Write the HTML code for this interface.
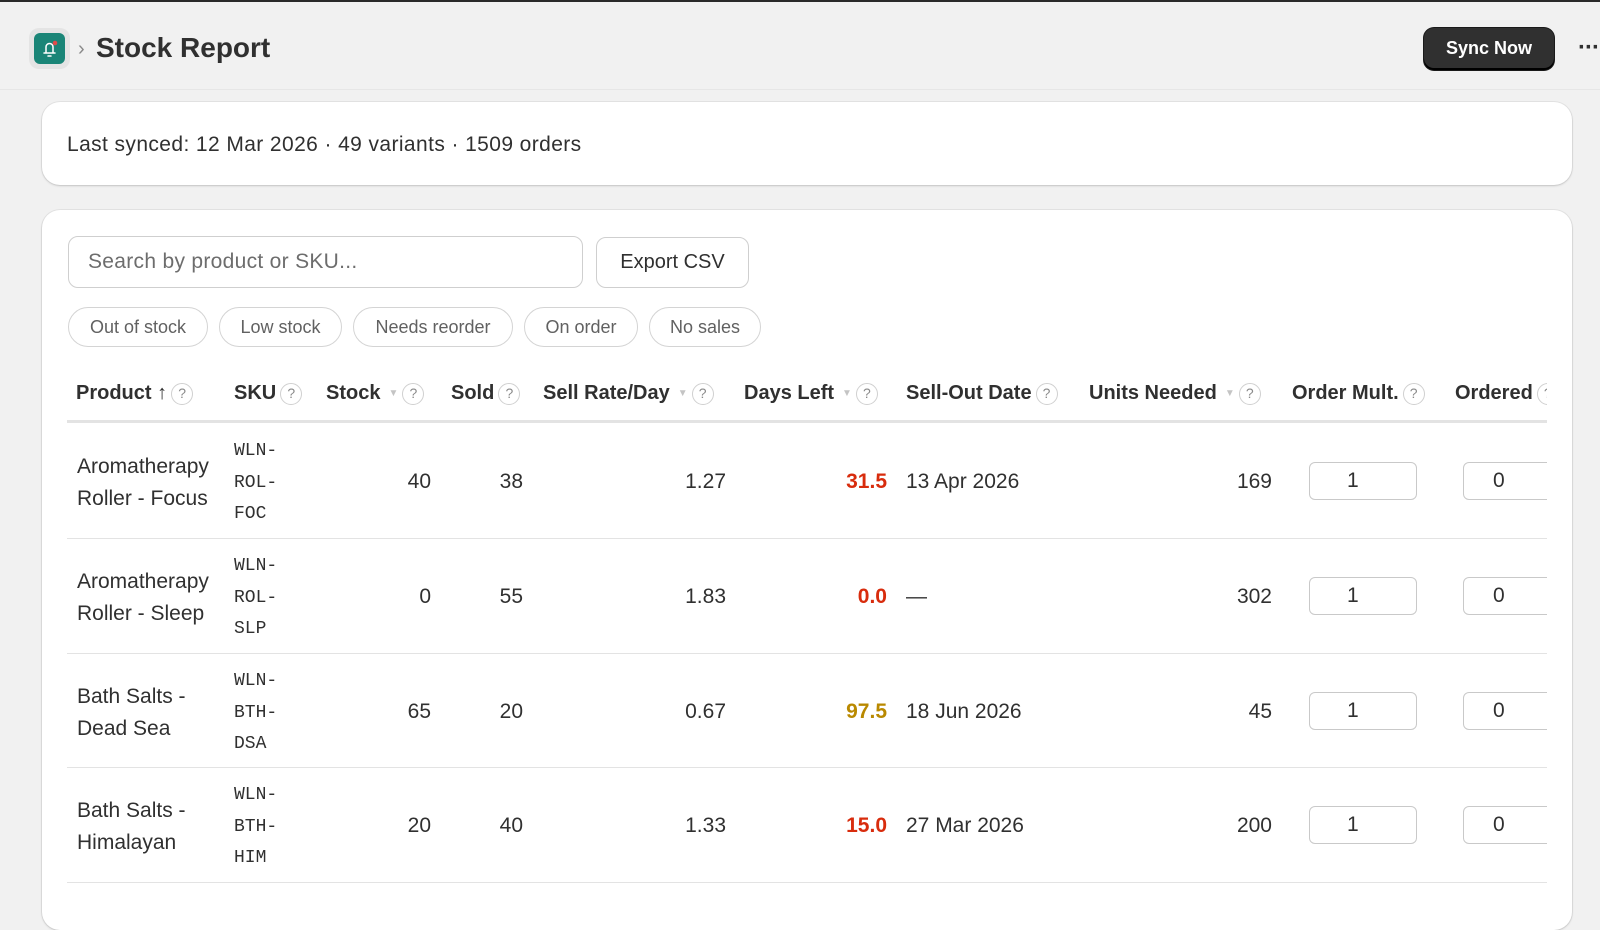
<!DOCTYPE html>
<html><head><meta charset="utf-8"><style>
*{box-sizing:border-box;margin:0;padding:0}
body{width:1600px;height:900px;overflow:hidden;background:#f1f1f1;font-family:"Liberation Sans",sans-serif;color:#303030;position:relative}
.a{position:absolute;white-space:nowrap}
.topline{left:0;top:0;width:1600px;height:2px;background:#2a2a2a}
.hdr{left:0;top:2px;width:1600px;height:88px;border-bottom:1px solid #e6e6e6;background:#f1f1f1}
.card{background:#fff;border-radius:18px;box-shadow:0 1px 2px rgba(0,0,0,.15),0 0 0 1px rgba(0,0,0,.05)}
.pill{top:307px;height:40px;border:1px solid #d4d4d4;border-radius:20px;font-size:18px;color:#616161;text-align:center;line-height:38px}
.th{top:382px;font-size:20px;font-weight:bold;color:#303030}
.q{display:inline-block;width:22px;height:22px;border:1.5px solid #d0d0d0;border-radius:50%;font-size:14px;font-weight:normal;color:#8a8a8a;text-align:center;line-height:19px;vertical-align:middle;margin-left:4px}
.car{font-size:10px;color:#c4c4c4;font-weight:normal;vertical-align:middle;margin-left:8px}
.td{font-size:21px;color:#303030}
.r{text-align:right}
.mono{font-family:"Liberation Mono",monospace;font-size:18px;line-height:31.5px}
.inp{width:108px;height:38px;border:1px solid #c9c9c9;border-radius:6px;background:#fff;font-size:21px;line-height:36px}
.sep{left:67px;width:1480px;height:1px;background:#e3e3e3}
</style></head><body>
<div class="a topline"></div>
<div class="a hdr"></div>
<div class="a" style="left:29px;top:28px;width:41px;height:41px;border-radius:10px;background:#e4e4e4"></div>
<div class="a" style="left:34px;top:33px;width:31px;height:31px;border-radius:6px;background:#1a8577">
<svg width="31" height="31" viewBox="0 0 31 31"><path d="M10 20h11M12 20v-6a3.5 3.5 0 0 1 7 0v6M14 23h3" stroke="#fff" stroke-width="1.5" fill="none" stroke-linecap="round"/><circle cx="21" cy="10" r="2.3" fill="#e14b4b"/></svg></div>
<div class="a" style="left:78px;top:38px;font-size:20px;color:#8a8a8a">›</div>
<div class="a" style="left:96px;top:32px;font-size:28px;font-weight:bold;color:#303030">Stock Report</div>
<div class="a" style="left:1424px;top:28px;width:130px;height:42px;border-radius:10px;background:#303030;box-shadow:inset 0 -2px 0 #000,0 0 0 1px #1a1a1a;color:#fff;font-size:18px;font-weight:bold;text-align:center;line-height:40px">Sync Now</div>
<div class="a" style="left:1578px;top:34px;font-size:24px;font-weight:bold;color:#303030;letter-spacing:-1px">···</div>

<div class="a card" style="left:42px;top:102px;width:1530px;height:83px"></div>
<div class="a" style="left:67px;top:133px;font-size:21px;letter-spacing:0.4px;color:#303030">Last synced: 12 Mar 2026 · 49 variants · 1509 orders</div>

<div class="a card" style="left:42px;top:210px;width:1530px;height:720px"></div>
<div class="a" style="left:68px;top:236px;width:515px;height:52px;border:1px solid #cfcfcf;border-radius:10px;font-size:21px;letter-spacing:0.3px;color:#6d6d6d;line-height:50px;padding-left:19px">Search by product or SKU...</div>
<div class="a" style="left:596px;top:237px;width:153px;height:51px;border:1px solid #cfcfcf;border-radius:10px;font-size:20px;color:#303030;text-align:center;line-height:49px">Export CSV</div>
<div class="a pill" style="left:68px;width:140px">Out of stock</div>
<div class="a pill" style="left:219px;width:123px">Low stock</div>
<div class="a pill" style="left:353px;width:160px">Needs reorder</div>
<div class="a pill" style="left:524px;width:114px">On order</div>
<div class="a pill" style="left:649px;width:112px">No sales</div>

<div class="a th" style="left:76px">Product ↑<span class="q">?</span></div>
<div class="a th" style="left:234px">SKU<span class="q">?</span></div>
<div class="a th" style="left:326px">Stock<span class="car">▼</span><span class="q">?</span></div>
<div class="a th" style="left:451px">Sold<span class="q">?</span></div>
<div class="a th" style="left:543px">Sell Rate/Day<span class="car">▼</span><span class="q">?</span></div>
<div class="a th" style="left:744px">Days Left<span class="car">▼</span><span class="q">?</span></div>
<div class="a th" style="left:906px">Sell-Out Date<span class="q">?</span></div>
<div class="a th" style="left:1089px">Units Needed<span class="car">▼</span><span class="q">?</span></div>
<div class="a th" style="left:1292px">Order Mult.<span class="q">?</span></div>
<div class="a" style="left:1455px;top:382px;width:92px;overflow:hidden;font-size:20px;font-weight:bold">Ordered<span class="q">?</span></div>
<div class="a" style="left:67px;top:420px;width:1480px;height:3px;background:#e3e3e3"></div>

<div class="a" style="left:0;top:423px;width:1600px;height:115px">
<div class="a td" style="left:77px;top:28px;line-height:32px">Aromatherapy<br>Roller - Focus</div>
<div class="a mono" style="left:234px;top:13px">WLN-<br>ROL-<br>FOC</div>
<div class="a td r" style="right:1169px;top:47px">40</div>
<div class="a td r" style="right:1077px;top:47px">38</div>
<div class="a td r" style="right:874px;top:47px">1.27</div>
<div class="a td r" style="right:713px;top:47px;color:#d82c0d;font-weight:bold">31.5</div>
<div class="a td" style="left:906px;top:47px">13 Apr 2026</div>
<div class="a td r" style="right:328px;top:47px">169</div>
<div class="a inp" style="left:1309px;top:39px;padding-left:37px">1</div>
<div class="a" style="left:1463px;top:39px;width:84px;overflow:hidden"><div class="inp" style="padding-left:29px">0</div></div>
</div>
<div class="a sep" style="top:538px"></div>
<div class="a" style="left:0;top:538px;width:1600px;height:115px">
<div class="a td" style="left:77px;top:28px;line-height:32px">Aromatherapy<br>Roller - Sleep</div>
<div class="a mono" style="left:234px;top:13px">WLN-<br>ROL-<br>SLP</div>
<div class="a td r" style="right:1169px;top:47px">0</div>
<div class="a td r" style="right:1077px;top:47px">55</div>
<div class="a td r" style="right:874px;top:47px">1.83</div>
<div class="a td r" style="right:713px;top:47px;color:#d82c0d;font-weight:bold">0.0</div>
<div class="a td" style="left:906px;top:47px">—</div>
<div class="a td r" style="right:328px;top:47px">302</div>
<div class="a inp" style="left:1309px;top:39px;padding-left:37px">1</div>
<div class="a" style="left:1463px;top:39px;width:84px;overflow:hidden"><div class="inp" style="padding-left:29px">0</div></div>
</div>
<div class="a sep" style="top:653px"></div>
<div class="a" style="left:0;top:653px;width:1600px;height:115px">
<div class="a td" style="left:77px;top:28px;line-height:32px">Bath Salts -<br>Dead Sea</div>
<div class="a mono" style="left:234px;top:13px">WLN-<br>BTH-<br>DSA</div>
<div class="a td r" style="right:1169px;top:47px">65</div>
<div class="a td r" style="right:1077px;top:47px">20</div>
<div class="a td r" style="right:874px;top:47px">0.67</div>
<div class="a td r" style="right:713px;top:47px;color:#b98900;font-weight:bold">97.5</div>
<div class="a td" style="left:906px;top:47px">18 Jun 2026</div>
<div class="a td r" style="right:328px;top:47px">45</div>
<div class="a inp" style="left:1309px;top:39px;padding-left:37px">1</div>
<div class="a" style="left:1463px;top:39px;width:84px;overflow:hidden"><div class="inp" style="padding-left:29px">0</div></div>
</div>
<div class="a sep" style="top:767px"></div>
<div class="a" style="left:0;top:767px;width:1600px;height:115px">
<div class="a td" style="left:77px;top:28px;line-height:32px">Bath Salts -<br>Himalayan</div>
<div class="a mono" style="left:234px;top:13px">WLN-<br>BTH-<br>HIM</div>
<div class="a td r" style="right:1169px;top:47px">20</div>
<div class="a td r" style="right:1077px;top:47px">40</div>
<div class="a td r" style="right:874px;top:47px">1.33</div>
<div class="a td r" style="right:713px;top:47px;color:#d82c0d;font-weight:bold">15.0</div>
<div class="a td" style="left:906px;top:47px">27 Mar 2026</div>
<div class="a td r" style="right:328px;top:47px">200</div>
<div class="a inp" style="left:1309px;top:39px;padding-left:37px">1</div>
<div class="a" style="left:1463px;top:39px;width:84px;overflow:hidden"><div class="inp" style="padding-left:29px">0</div></div>
</div>
<div class="a sep" style="top:882px"></div>
</body></html>
